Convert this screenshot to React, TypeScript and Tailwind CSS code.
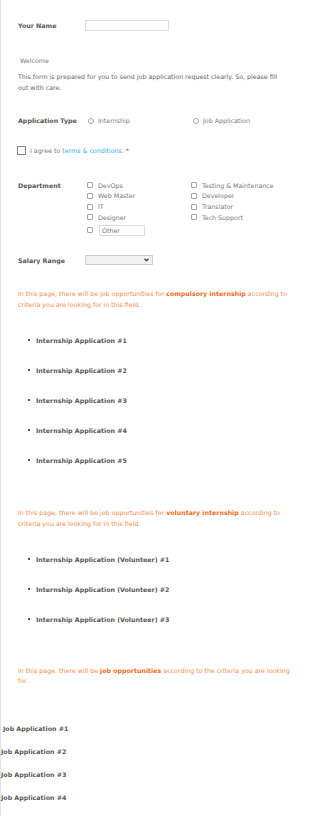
import { ReactNode } from "react";

const Box = () => (
	<span className="inline-block w-[6px] h-[6px] border border-[#a8a8a8] rounded-[1px] bg-white shrink-0" />
);

const Radio = () => (
	<span className="inline-block w-[6px] h-[6px] border border-[#a8a8a8] rounded-full bg-white shrink-0" />
);

const Option = ({ children }: { children: ReactNode }) => (
	<div className="flex items-center gap-[5px] h-[10.7px] text-[#7a7a7a]">
		<Box />
		<span>{children}</span>
	</div>
);

const Orange = ({ children }: { children: ReactNode }) => (
	<p className="text-[#f58b4c] leading-[11px] pr-[18px]">{children}</p>
);

const Bullet = ({ label, first }: { label: string; first?: boolean }) => (
	<li
		className={`${first ? "mt-[25px]" : "mt-[19px]"} flex items-center h-[11px] pl-[27px] gap-[6px] font-bold text-[#585858]`}
	>
		<span className="w-[2px] h-[2px] bg-[#585858]" />
		{label}
	</li>
);

const App = () => {
	const internships = [1, 2, 3, 4, 5];
	const volunteers = [1, 2, 3];
	const jobs = [1, 2, 3, 4];

	return (
		<div className="w-[310px] min-h-[816px] bg-white border-l border-[#e4e4e4] font-['DejaVu_Sans',Verdana,sans-serif] text-[6.3px] text-[#666]">
			{/* Your name */}
			<div className="flex items-center pt-[20px] pl-[17px] h-[31px]">
				<label className="w-[67px] font-bold text-[#585858]">Your Name</label>
				<div className="w-[84px] h-[11px] border border-[#dcdcdc] bg-white" />
			</div>

			<p className="mt-[24px] pl-[19px] leading-[11px] text-[#777]">Welcome</p>
			<p className="mt-[5px] pl-[17px] pr-[22px] leading-[11px] text-[#666]">
				This form is prepared for you to send job application request clearly.
				So, please fill out with care.
			</p>

			{/* Application type */}
			<div className="mt-[22px] flex items-center h-[11px] pl-[17px]">
				<label className="w-[70px] font-bold text-[#585858]">Application Type</label>
				<div className="w-[105px] flex items-center gap-[4px] text-[#7a7a7a]">
					<Radio />
					<span>Internship</span>
				</div>
				<div className="flex items-center gap-[4px] text-[#7a7a7a]">
					<Radio />
					<span>Job Application</span>
				</div>
			</div>

			{/* Agreement */}
			<div className="mt-[19px] flex items-center h-[11px] pl-[16px] gap-[4px]">
				<span className="inline-block w-[9px] h-[9px] border border-[#8a8a8a] bg-white" />
				<span className="text-[#777]">
					I agree to <span className="text-[#2bb3ea]">terms &amp; conditions.</span>{" "}
					<span className="text-[#e53935]">*</span>
				</span>
			</div>

			{/* Department */}
			<div className="mt-[24px] flex pl-[17px]">
				<label className="w-[69px] h-[10.7px] flex items-center font-bold text-[#585858]">
					Department
				</label>
				<div className="w-[104px]">
					<Option>DevOps</Option>
					<Option>Web Master</Option>
					<Option>IT</Option>
					<Option>Designer</Option>
					<div className="mt-[1px] flex items-center gap-[6px] h-[13px]">
						<Box />
						<div className="w-[46px] h-[11px] border border-[#dcdcdc] flex items-center pl-[2px] text-[#777]">
							Other
						</div>
					</div>
				</div>
				<div>
					<Option>Testing &amp; Maintenance</Option>
					<Option>Developer</Option>
					<Option>Translator</Option>
					<Option>Tech Support</Option>
				</div>
			</div>

			{/* Salary */}
			<div className="mt-[18px] flex items-center h-[11px] pl-[17px]">
				<label className="w-[67px] font-bold text-[#585858]">Salary Range</label>
				<div className="w-[68px] h-[10px] border border-[#cfcfcf] bg-[#f1f1f1] flex items-center justify-end pr-[3px]">
					<svg width="5" height="4" viewBox="0 0 10 8">
						<path d="M1 1.5 L5 5.5 L9 1.5" fill="none" stroke="#333" strokeWidth="2.2" />
					</svg>
				</div>
			</div>

			{/* Compulsory internship */}
			<div className="mt-[22px] pl-[17px]">
				<Orange>
					In this page, there will be job opportunities for{" "}
					<b className="text-[#f26b1d]">compulsory internship</b> according to
					criteria you are looking for in this field.
				</Orange>
			</div>
			<ul>
				{internships.map((n) => (
					<Bullet key={n} first={n === 1} label={`Internship Application #${n}`} />
				))}
			</ul>

			{/* Voluntary internship */}
			<div className="mt-[41px] pl-[17px]">
				<Orange>
					In this page, there will be job opportunities for{" "}
					<b className="text-[#f26b1d]">voluntary internship</b> according to
					criteria you are looking for in this field.
				</Orange>
			</div>
			<ul>
				{volunteers.map((n) => (
					<Bullet
						key={n}
						first={n === 1}
						label={`Internship Application (Volunteer) #${n}`}
					/>
				))}
			</ul>

			{/* Job applications */}
			<div className="mt-[41px] pl-[17px]">
				<p className="text-[#f58b4c] leading-[10.5px] pr-[18px]">
					In this page, there will be <b className="text-[#f26b1d]">job opportunities</b>{" "}
					according to the criteria you are looking for.
				</p>
			</div>
			<div className="mt-[36px]">
				{jobs.map((n) => (
					<div
						key={n}
						className={`${n === 1 ? "pl-[2px]" : "mt-[12px]"} h-[11px] leading-[11px] font-bold text-[#585858]`}
					>
						Job Application #{n}
					</div>
				))}
			</div>
		</div>
	);
};

export default App;
